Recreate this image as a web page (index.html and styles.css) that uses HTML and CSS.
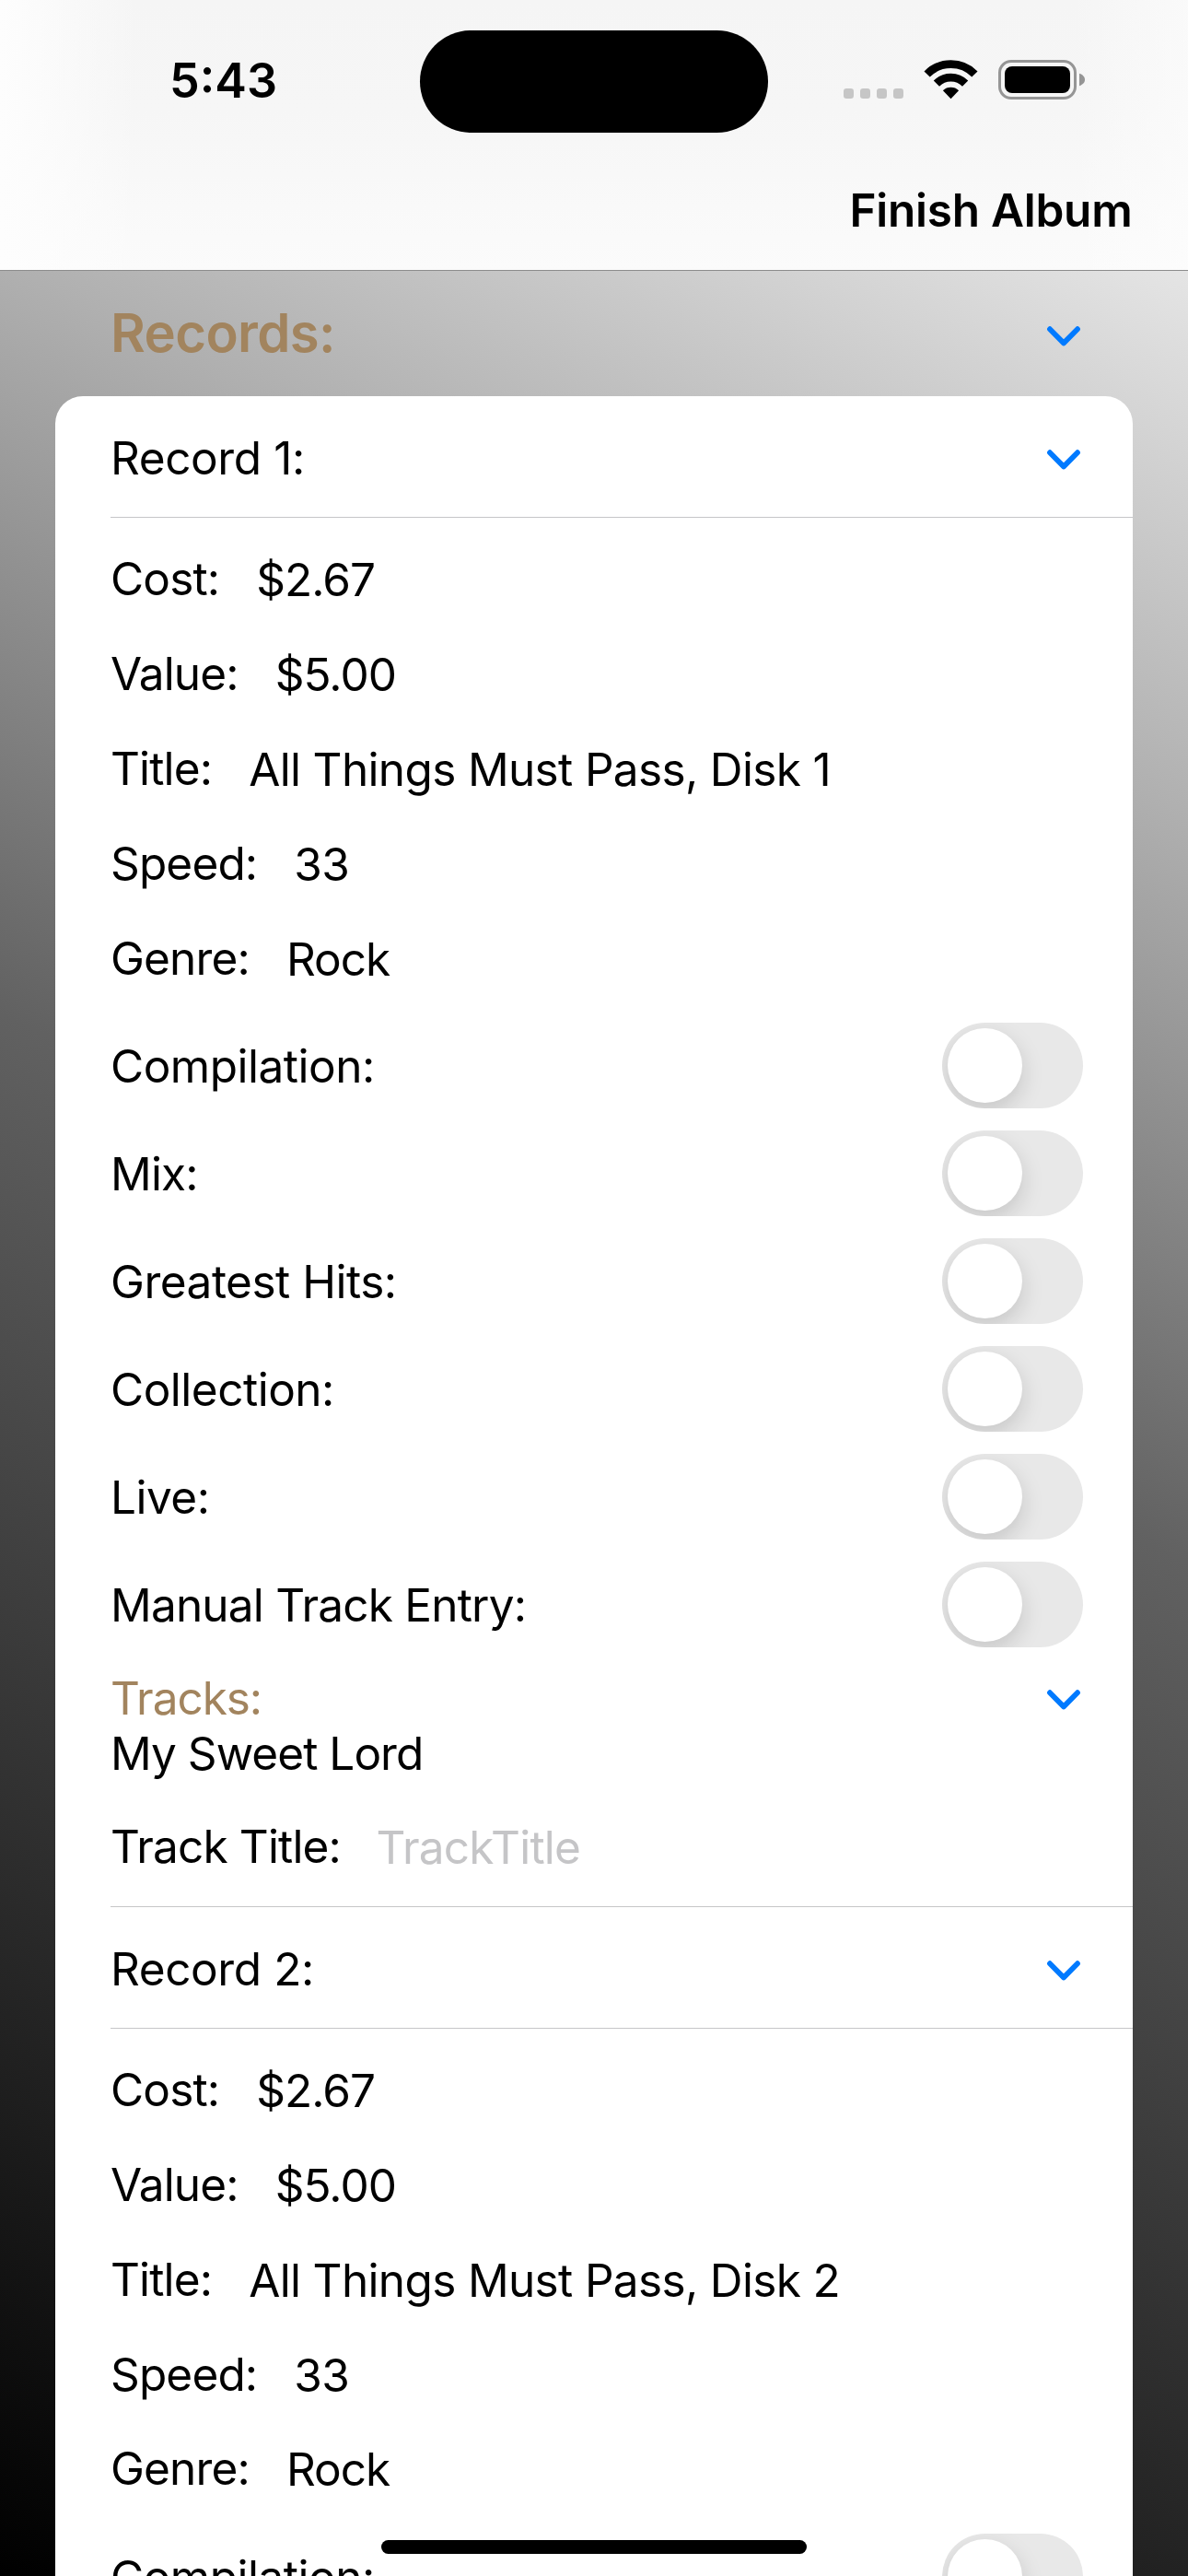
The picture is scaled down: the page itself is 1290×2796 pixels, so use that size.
FILE: index.html
```html
<!DOCTYPE html>
<html lang="en">
<head>
<meta charset="utf-8">
<title>Finish Album</title>
<link rel="stylesheet" href="styles.css">
</head>
<body>
<svg class="defs" width="0" height="0">
  <symbol id="chevron" viewBox="0 0 36 22">
    <path d="M3 3.2 18 18.4 33 3.2" fill="none" stroke="#007aff" stroke-width="5.8" stroke-linecap="round" stroke-linejoin="round"/>
  </symbol>
</svg>
<div class="screen">
  <header class="topbar">
    <div class="status">
      <div class="time">5:43</div>
      <div class="island"></div>
      <svg class="status-icons" width="262" height="43" viewBox="0 0 262 43">
        <g fill="#c6c6c6">
          <rect x="0" y="31" width="11" height="11" rx="3.2"/>
          <rect x="18" y="31" width="11" height="11" rx="3.2"/>
          <rect x="36" y="31" width="11" height="11" rx="3.2"/>
          <rect x="54" y="31" width="11" height="11" rx="3.2"/>
        </g>
        <g fill="none" stroke="#000" stroke-width="8.8">
          <path d="M90.6 15.5a36.5 36.5 0 0 1 51.8 0"/>
          <path d="M100.9 25.6a22 22 0 0 1 31.2 0"/>
        </g>
        <path d="M116.5 42.2 107.9 33.2a12.4 12.4 0 0 1 17.2 0Z"/>
        <rect x="169.5" y="1.5" width="82" height="40" rx="12.5" fill="none" stroke="#959595" stroke-width="3"/>
        <rect x="175" y="7" width="71" height="29" rx="8"/>
        <path d="M256 14.8c3.6 1.2 6 3.6 6 6.7s-2.4 5.500-6 6.700Z" fill="#959595"/>
      </svg>
    </div>
    <div class="nav"><span class="nav-action">Finish Album</span></div>
  </header>

  <div class="section-head">
    <span>Records:</span>
    <svg class="chev" width="36" height="22"><use href="#chevron"/></svg>
  </div>

  <main class="card">
    <div class="record-head"><span>Record 1:</span><svg class="chev" width="36" height="22"><use href="#chevron"/></svg></div>
    <div class="record-body">
      <div class="fields">
        <div class="field"><span class="label">Cost:</span><span class="value num">$2.67</span></div>
        <div class="field"><span class="label">Value:</span><span class="value num">$5.00</span></div>
        <div class="field"><span class="label">Title:</span><span class="value">All Things Must Pass, Disk 1</span></div>
        <div class="field"><span class="label">Speed:</span><span class="value">33</span></div>
        <div class="field"><span class="label">Genre:</span><span class="value num">Rock</span></div>
      </div>
      <div class="toggles">
        <div class="toggle-row"><span>Compilation:</span><i class="toggle"></i></div>
        <div class="toggle-row tight"><span>Mix:</span><i class="toggle"></i></div>
        <div class="toggle-row"><span>Greatest Hits:</span><i class="toggle"></i></div>
        <div class="toggle-row"><span>Collection:</span><i class="toggle"></i></div>
        <div class="toggle-row"><span>Live:</span><i class="toggle"></i></div>
        <div class="toggle-row tight"><span>Manual Track Entry:</span><i class="toggle"></i></div>
      </div>
      <div class="tracks">
        <div class="tracks-head"><span>Tracks:</span><svg class="chev" width="36" height="22"><use href="#chevron"/></svg></div>
        <div class="track">My Sweet Lord</div>
      </div>
      <div class="field track-field"><span class="label">Track Title:</span><span class="value">TrackTitle</span></div>
    </div>

    <div class="record-head"><span>Record 2:</span><svg class="chev" width="36" height="22"><use href="#chevron"/></svg></div>
    <div class="record-body">
      <div class="fields">
        <div class="field"><span class="label">Cost:</span><span class="value num">$2.67</span></div>
        <div class="field"><span class="label">Value:</span><span class="value num">$5.00</span></div>
        <div class="field"><span class="label">Title:</span><span class="value">All Things Must Pass, Disk 2</span></div>
        <div class="field"><span class="label">Speed:</span><span class="value">33</span></div>
        <div class="field"><span class="label">Genre:</span><span class="value num">Rock</span></div>
      </div>
      <div class="toggles">
        <div class="toggle-row"><span>Compilation:</span><i class="toggle"></i></div>
      </div>
    </div>
  </main>
  <div class="home-indicator"></div>
</div>
</body>
</html>
```
FILE: styles.css
```css
* { box-sizing: border-box; }

body { margin: 0; }

.defs { display: block; }

.screen {
  position: relative;
  width: 1290px;
  height: 2796px;
  overflow: hidden;
  background: linear-gradient(204.8deg, #fff 0%, #b0b0b0 26%, #616161 50%, #000 100%);
  color: #000;
  font-family: Inter, "Liberation Sans", sans-serif;
  font-size: 49.5px;
  line-height: 60px;
  letter-spacing: -0.65px;
  white-space: nowrap;
}

/* Status bar and navigation bar */
.topbar {
  height: 294px;
  border-bottom: 1px solid #8c8c8c;
  background:
    linear-gradient(90deg, #fdfdfd 0, rgba(253, 253, 253, 0.7) 50px, rgba(253, 253, 253, 0) 150px, rgba(253, 253, 253, 0) 1160px, rgba(253, 253, 253, 0.6) 1290px),
    linear-gradient(180deg, #f5f5f5 0, #f6f6f6 120px, #fbfbfb 293px);
}

.status {
  display: flex;
  height: 162px;
}

.time {
  width: 456px;
  padding: 58px 0 0 184px;
  font-size: 52px;
  font-weight: 600;
  letter-spacing: 0;
}

.island {
  width: 378px;
  height: 111px;
  margin-top: 33px;
  border-radius: 56px;
  background: #000;
}

.status-icons { margin: 65px 0 0 82px; }

.nav {
  display: flex;
  align-items: center;
  justify-content: flex-end;
  height: 131px;
  padding-right: 60.5px;
}

.nav-action {
  font-weight: 600;
  letter-spacing: -0.25px;
}

.chev {
  display: block;
  margin-top: 4px;
}

.section-head {
  display: flex;
  align-items: center;
  justify-content: space-between;
  height: 136px;
  padding: 0 117px 2px 120px;
  color: #a2845e;
  font-size: 58px;
  font-weight: 600;
  letter-spacing: -0.6px;
}

.section-head .chev { margin-top: 7px; }

/* Record list */
.card {
  margin: 0 60px;
  padding-left: 60px;
  border-radius: 30px 30px 0 0;
  background: #fff;
}

.record-head {
  display: flex;
  align-items: center;
  justify-content: space-between;
  height: 132px;
  padding: 3px 57px 0 0;
  border-bottom: 1px solid #c6c6c8;
  letter-spacing: -0.4px;
}

.record-body {
  padding: 15px 0 13.5px;
  border-bottom: 1px solid #c6c6c8;
}

.field {
  display: flex;
  align-items: center;
  gap: 40px;
  height: 102.8px;
}

.label { letter-spacing: -0.85px; }

.value { padding-top: 2px; }
.value.num { letter-spacing: -0.95px; }

.track-field { gap: 38.5px; }
.track-field .value {
  color: #c5c5c7;
  letter-spacing: -0.75px;
}

.toggles { padding-top: 7px; }

.toggle-row {
  display: flex;
  align-items: center;
  justify-content: space-between;
  height: 117px;
  padding-right: 54px;
  letter-spacing: -0.5px;
}

.toggle-row.tight { letter-spacing: -0.8px; }
.toggle-row span { padding-top: 1px; }

.toggle {
  display: block;
  width: 153px;
  height: 93px;
  padding: 6px;
  overflow: hidden;
  border-radius: 47px;
  background: #e8e8e8;
}

.toggle::before {
  content: "";
  display: block;
  width: 81px;
  height: 81px;
  border-radius: 50%;
  background: #fff;
  box-shadow: 0 9px 24px rgba(0, 0, 0, 0.15);
}

.tracks { padding: 12.5px 0 18px; }

.tracks-head {
  display: flex;
  align-items: center;
  justify-content: space-between;
  height: 61px;
  padding-right: 57px;
  color: #a2845e;
  letter-spacing: -1.05px;
}

.track {
  height: 61px;
  line-height: 61px;
  letter-spacing: -0.95px;
}

.home-indicator {
  position: absolute;
  left: 414px;
  bottom: 24px;
  width: 462px;
  height: 15px;
  border-radius: 8px;
  background: #000;
}
```
